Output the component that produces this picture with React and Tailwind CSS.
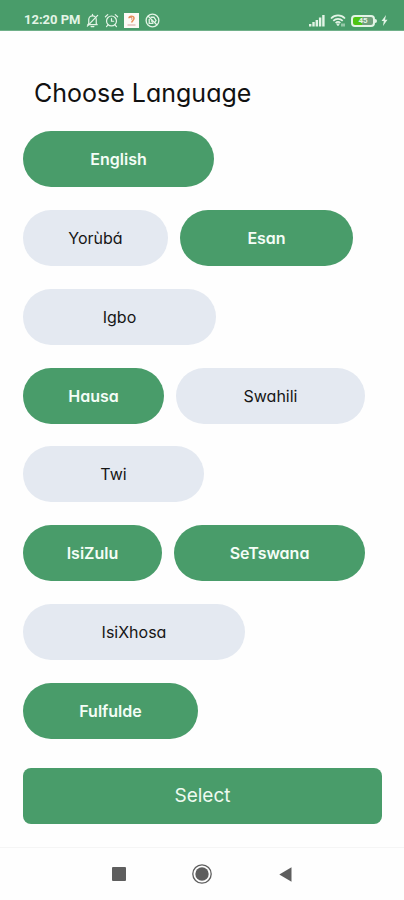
import React, { useState } from 'react';

const rows = [
  [{ name: 'English', size: 'w-[191px]' }],
  [{ name: 'Yorùbá', size: 'w-[145px]' }, { name: 'Esan', size: 'w-[173px]' }],
  [{ name: 'Igbo', size: 'w-[193px]' }],
  [{ name: 'Hausa', size: 'w-[141px]' }, { name: 'Swahili', size: 'w-[189px]' }],
  [{ name: 'Twi', size: 'w-[181px]' }],
  [{ name: 'IsiZulu', size: 'w-[139px]' }, { name: 'SeTswana', size: 'w-[191px]' }],
  [{ name: 'IsiXhosa', size: 'w-[222px]' }],
  [{ name: 'Fulfulde', size: 'w-[175px]' }],
];

const StatusBar = () => (
  <header className="h-[31px] shrink-0 bg-[#499c6a] border-b border-[#6fb089] flex items-end justify-between pl-6 pr-4 pb-[2px] text-[#e3f4e6]">
    <div className="flex items-center gap-1">
      <span className="font-['Roboto',sans-serif] text-[13px] leading-4 font-bold">12:20 PM</span>
      {/* muted bell */}
      <svg width="15" height="15" viewBox="0 0 16 16" fill="none" stroke="currentColor" strokeWidth="1.3" strokeLinecap="round" strokeLinejoin="round">
        <path d="M4 11.500V7a4 4 0 0 1 8 0v4.500l1 1H3z" />
        <path d="M6.500 14.500h3M8 1.500v1.200M2.500 14L13.500 2.500" />
      </svg>
      {/* alarm */}
      <svg width="15" height="15" viewBox="0 0 16 16" fill="none" stroke="currentColor" strokeWidth="1.3" strokeLinecap="round">
        <circle cx="8" cy="8.500" r="5.300" />
        <path d="M8 6v2.800h2.300M1.500 4l2.500-2.300M14.500 4L12 1.700M4 13l-1.300 1.500M12 13l1.300 1.500" />
      </svg>
      {/* app notification */}
      <svg width="15" height="15" viewBox="0 0 15 15" fill="none" className="mx-px">
        <rect width="15" height="15" fill="#fdfaf6" />
        <path d="M5 5.300C5 2.500 10 2.500 10 5.200c0 2-2 2.300-2.300 4.300" stroke="#e8935c" strokeWidth="1.600" />
        <path d="M5.500 4.500c2-1 3 .5 2 2" stroke="#d77a57" />
        <path d="M3.500 12h8" stroke="#d5a6a0" />
      </svg>
      {/* blocked */}
      <svg width="15" height="15" viewBox="0 0 16 16" fill="none" stroke="currentColor" strokeWidth="1.400" className="ml-px">
        <circle cx="8" cy="8" r="6.800" />
        <path d="M3.200 3.200l9.600 9.600" />
        <path d="M6 4.500h3.500l2.300 3.500-1.300 2M4.500 6.500v4.500h4.500M6.500 8l2 2" />
      </svg>
    </div>
    <div className="flex items-center gap-[5px] pb-px">
      <svg width="16" height="13" viewBox="0 0 16 13" fill="currentColor">
        <rect x="0" y="10" width="2.400" height="2.500" />
        <rect x="3.300" y="8" width="2.400" height="4.500" />
        <rect x="6.600" y="6" width="2.400" height="6.500" />
        <rect x="9.900" y="3.500" width="2.400" height="9" />
        <rect x="13.200" y="1" width="2.400" height="11.500" />
      </svg>
      <svg width="16" height="13" viewBox="0 0 16 13" fill="none" stroke="currentColor" strokeWidth="1.700">
        <path d="M1 4.500C5 .4 11 .4 15 4.500M3.300 6.800c2.700-2.600 6.700-2.600 9.400 0M5.600 9c1.400-1.300 3.400-1.300 4.800 0" />
        <path d="M6.500 9.800h3L8 12z" fill="currentColor" strokeWidth=".5" />
        <path d="M12 9.500v3M14 9.500v3" strokeWidth="1" />
      </svg>
      {/* battery with its charge level */}
      <div className="flex items-center gap-1">
        <div className="flex items-center">
          <div className="w-6 h-3 rounded-[4px] border-2 border-[#e3f4e6] bg-gradient-to-r from-[#4fc414] from-45% to-[#6f9f7c] to-45% flex items-center justify-center">
            <span className="font-['Roboto',sans-serif] text-[8px] leading-none font-bold">45</span>
          </div>
          <div className="w-[2px] h-1 rounded-r bg-[#e3f4e6]" />
        </div>
        <svg width="7" height="11" viewBox="0 0 7 11" fill="currentColor">
          <path d="M5 0L.5 6h2.300L2 11l4.500-6.300H4z" />
        </svg>
      </div>
    </div>
  </header>
);

const NavBar = () => (
  <nav className="h-[53px] shrink-0 border-t border-[#f5f5f5] flex items-center justify-center gap-[63px] text-[#5e5e5e]">
    <button type="button" aria-label="Recent apps" className="w-5 h-6 flex items-center justify-center">
      <svg width="14" height="14" viewBox="0 0 14 14" fill="currentColor"><rect width="14" height="14" rx="1" /></svg>
    </button>
    <button type="button" aria-label="Home" className="w-5 h-6 flex items-center justify-center">
      <svg width="20" height="20" viewBox="0 0 20 20">
        <circle cx="10" cy="10" r="9.200" fill="none" stroke="currentColor" strokeWidth="1.300" />
        <circle cx="10" cy="10" r="6.700" fill="currentColor" />
      </svg>
    </button>
    <button type="button" aria-label="Back" className="w-5 h-6 flex items-center justify-center">
      <svg width="13" height="15" viewBox="0 0 13 15" fill="currentColor"><path d="M12.500.3v14.400L.3 7.500z" /></svg>
    </button>
  </nav>
);

const App = () => {
  const [selected, setSelected] = useState(['English', 'Esan', 'Hausa', 'IsiZulu', 'SeTswana', 'Fulfulde']);

  const toggle = (name) => {
    setSelected((prev) => (prev.includes(name) ? prev.filter((n) => n !== name) : [...prev, name]));
  };

  return (
    <div className="min-h-screen bg-[#fefefe] flex flex-col font-['Inter',sans-serif] [font-feature-settings:'cv11']">
      <StatusBar />

      <main className="flex-1 flex flex-col pl-[23px] pr-[22px] pt-11 pb-[23px]">
        <h1 className="text-[25px] leading-9 text-[#111111] pl-[11px] mb-5">Choose Language</h1>

        <div className="flex-1 flex flex-col justify-between gap-4">
          {rows.map((row) => (
            <div key={row[0].name} className="flex gap-3">
              {row.map(({ name, size }) => {
                const active = selected.includes(name);
                return (
                  <button
                    key={name}
                    type="button"
                    aria-pressed={active}
                    onClick={() => toggle(name)}
                    className={`${size} h-14 rounded-full text-base ${
                      active ? 'bg-[#499c6a] text-[#f4fdf6] font-semibold' : 'bg-[#e4e9f1] text-[#161616]'
                    }`}
                  >
                    {name}
                  </button>
                );
              })}
            </div>
          ))}
        </div>

        <button type="button" className="mt-[29px] h-14 w-full rounded-lg bg-[#499c6a] text-[#eefaf0] text-[19px] leading-6">
          Select
        </button>
      </main>

      <NavBar />
    </div>
  );
};

export default App;
